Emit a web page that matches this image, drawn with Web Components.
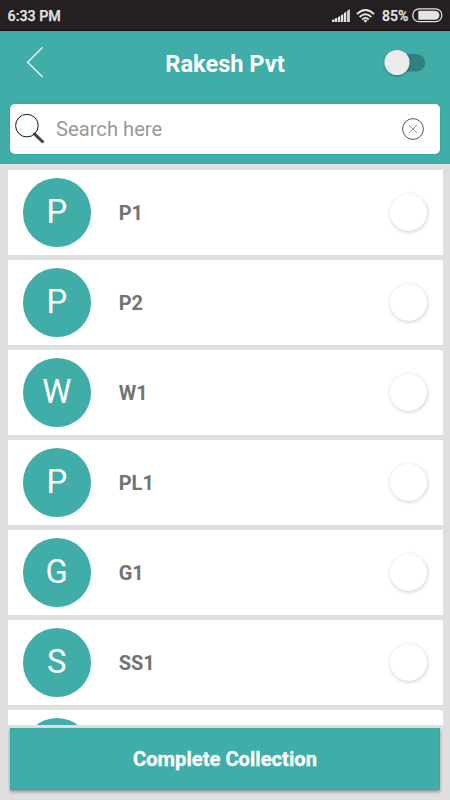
<!DOCTYPE html>
<html lang="en">
<head>
<meta charset="utf-8">
<title>Rakesh Pvt</title>
<style>
html,body{margin:0;height:100%;overflow:hidden;background:#dfdfdf;font-family:Roboto,"Liberation Sans",sans-serif}
</style>
</head>
<body>
<collection-app></collection-app>
<script>
function define(name, html, setup) {
  const t = document.createElement('template');
  t.innerHTML = html;
  customElements.define(name, class extends HTMLElement {
    connectedCallback() {
      if (this.shadowRoot) return;
      this.attachShadow({mode: 'open'}).appendChild(t.content.cloneNode(true));
      if (setup) setup(this, this.shadowRoot);
    }
  });
}

define('status-bar', `
<style>
:host{display:flex;box-sizing:border-box;height:31px;background:#241f21;border-bottom:1px solid #200e0e;color:#e4e4e4;align-items:center;padding:1px 7px 0 7.5px;font-weight:500;font-size:14.3px;line-height:20px}
.time{flex:1;white-space:nowrap;padding-top:1px;-webkit-text-stroke:.25px #e4e4e4}
.pct{font-size:14px;-webkit-text-stroke:.25px #e4e4e4;margin-left:7px;margin-right:3px;width:27px;white-space:nowrap}
svg{display:block;fill:#e4e4e4}
.signal{margin-right:6px}
</style>
<span class="time">6:33 PM</span>
<svg class="signal" width="18" height="14" viewBox="0 0 18 14"><path d="M0 13v-2l2.5-1v3zM3 13V9.6l2.3-.9V13zM6 13V8l2.3-1v6zM9 13V6.2l2.3-1.2v8zM12 13V4l2.3-1.5V13zM15.2 13V2L17.8 0v13z"/></svg>
<svg width="19" height="14" viewBox="0 0 19 14"><g fill="none" stroke="#e4e4e4" stroke-width="1.9"><path d="M.9 5.1Q9.5-2.9 18.1 5.1"/><path d="M3.6 8Q9.5 2.5 15.4 8"/><path d="M6.2 10.5Q9.5 7.5 12.8 10.5"/></g><path d="M7.5 11.5Q9.5 10 11.5 11.5L9.5 13.8z"/></svg>
<span class="pct">85%</span>
<svg width="31" height="15" viewBox="0 0 31 15"><rect x=".8" y=".8" width="29" height="12.9" rx="6.2" fill="none" stroke="#e4e4e4" stroke-width="1.3"/><path d="M6.3 2.8H23a4.4 4.4 0 0 1 0 8.9H6.3z"/></svg>
`);

define('toggle-switch', `
<style>
:host{display:block;width:42px;height:27px}
svg{display:block;overflow:visible}
.knob{filter:drop-shadow(0 1px 1px #0005)}
</style>
<svg width="42" height="27"><rect x="3" y="5" width="38.3" height="17.5" rx="8.7" fill="#31827e"/><circle class="knob" cx="13" cy="13.5" r="12.6" fill="#ebebeb"/></svg>
`);

define('title-bar', `
<style>
:host{display:grid;grid-template-columns:100px 1fr 100px;height:63px;align-items:center;color:#fff}
h1{margin:3px 0 0;text-align:center;font-size:23.6px;line-height:30px;font-weight:700;white-space:nowrap}
.back{margin:-1px 0 0 26px;display:block}
toggle-switch{margin-left:34px}
</style>
<svg class="back" width="20" height="34" viewBox="0 0 20 34"><path d="M16.7 2.3 1.6 17.2 16.7 32" fill="none" stroke="#fff" stroke-opacity=".85" stroke-width="1.4"/></svg>
<h1><slot></slot></h1>
<toggle-switch></toggle-switch>
`);

define('search-box', `
<style>
:host{display:flex;box-sizing:border-box;height:50px;margin:10px 10px 0;background:#fff;border-radius:5px;box-shadow:0 0 0 1px #20a59d66;align-items:center;padding:0 15px 0 4px;color:#999;font-size:20.2px}
span{flex:1;margin-left:11px;white-space:nowrap;line-height:28px}
svg{display:block}
</style>
<svg width="31" height="32" viewBox="0 0 31 32"><circle cx="12.9" cy="12.6" r="11.3" fill="none" stroke="#111" stroke-width="1"/><path d="M20.4 20.8 29.4 29.5" stroke="#444" stroke-width="3"/><path d="m19.5 20 1.5 1.3" stroke="#444" stroke-width="2"/></svg>
<span><slot></slot></span>
<svg width="24" height="24" viewBox="0 0 24 24" fill="none"><circle cx="12" cy="12" r="10.4" stroke="#444" stroke-width=".9"/><path d="m8 8 8 8m0-8-8 8" stroke="#888" stroke-width=".9"/></svg>
`);

define('item-row', `
<style>
:host{display:flex;box-sizing:border-box;height:85px;flex:none;background:#fff;align-items:center;padding:0 15.5px 0 15px}
.avatar{width:68.5px;height:68.5px;border-radius:50%;background:#40ada8;color:#fff;font-size:32.8px;line-height:68.5px;text-align:center;flex:none}
.name{flex:1;margin:1px 0 0 27.7px;font-size:20px;line-height:28px;font-weight:700;color:#737373}
.check{width:37px;height:37px;border-radius:50%;background:#fff;box-shadow:.5px 1px 4px #00000033}
</style>
<div class="avatar"></div><div class="name"><slot></slot></div><div class="check"></div>
`, (el, root) => { root.querySelector('.avatar').textContent = el.getAttribute('letter'); });

define('action-button', `
<style>
:host{display:flex;box-sizing:border-box;height:62px;margin:3px 10px 10px;background:#40ada8;box-shadow:0 2px 3px #00000055,inset 0 0 0 1px #20aaa266;align-items:center;justify-content:center;color:#fff;font-size:20.2px;font-weight:700;white-space:nowrap}
span{margin-bottom:1px;-webkit-text-stroke:.3px #fff}
</style>
<span><slot></slot></span>
`);

define('collection-app', `
<style>
:host{display:flex;flex-direction:column;width:450px;height:800px;background:#dfdfdf}
header{height:133px;background:#40ada8;flex:none}
main{display:flex;flex-direction:column;gap:5px;flex:1;min-height:0;overflow:hidden;margin:6px 7.5px 0}
</style>
<status-bar></status-bar>
<header><title-bar>Rakesh Pvt</title-bar><search-box>Search here</search-box></header>
<main>
<item-row letter="P">P1</item-row>
<item-row letter="P">P2</item-row>
<item-row letter="W">W1</item-row>
<item-row letter="P">PL1</item-row>
<item-row letter="G">G1</item-row>
<item-row letter="S">SS1</item-row>
<item-row letter=""></item-row>
</main>
<action-button>Complete Collection</action-button>
`);
</script>
</body>
</html>
